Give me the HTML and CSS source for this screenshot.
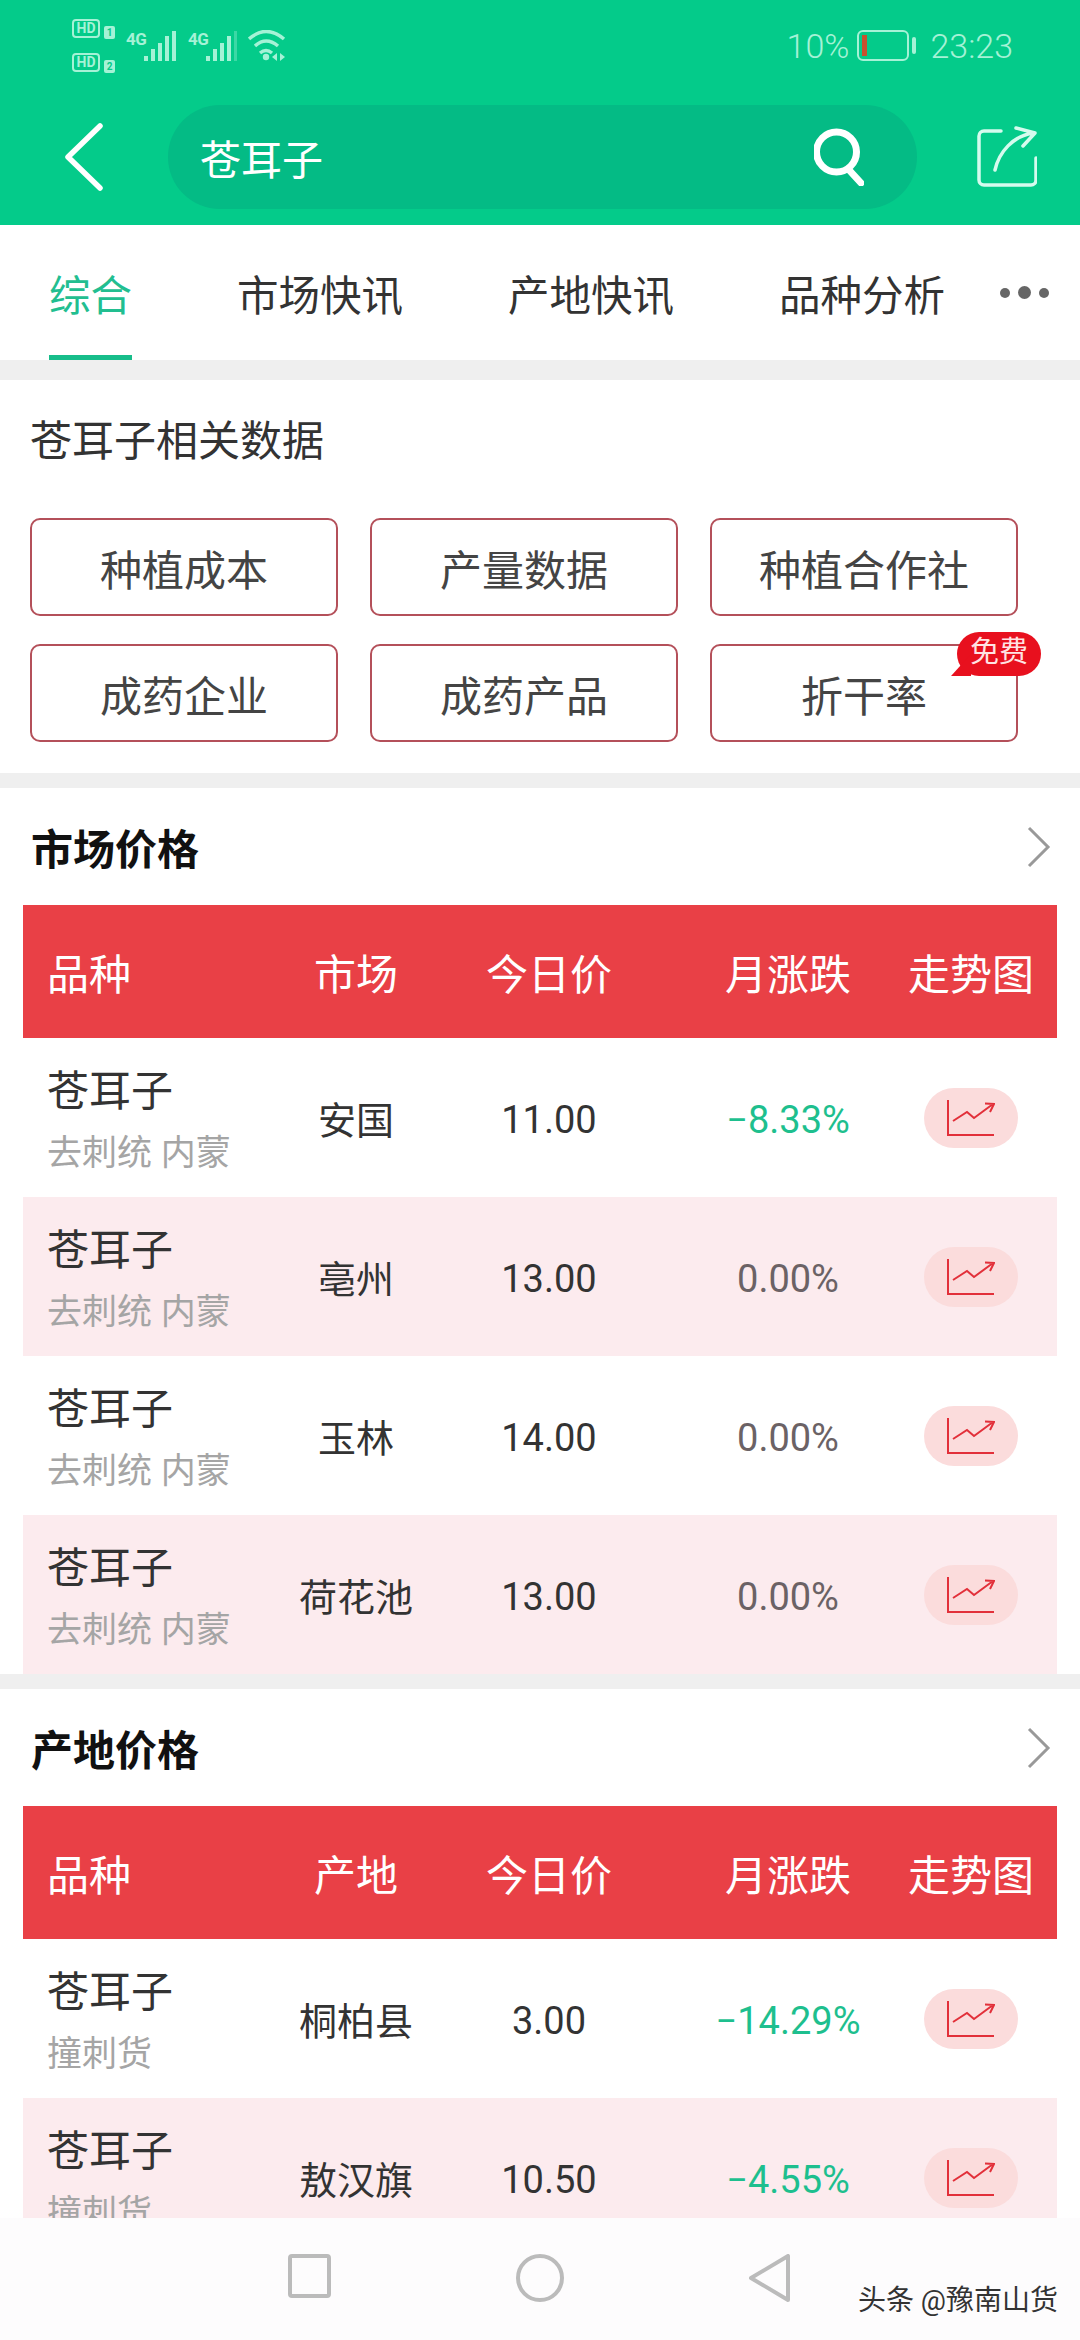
FILE: index.html
```html
<!DOCTYPE html>
<html lang="zh-CN">
<head>
  <meta charset="UTF-8">
  <title>苍耳子</title>
  <meta name="viewport" content="width=device-width, initial-scale=1.0">
  <link rel="stylesheet" href="styles.css">
</head>
<body>

  <svg class="defs" width="0" height="0">
    <symbol id="icono-grafico" viewBox="0 0 48 36">
      <path d="M1 0V35H47" fill="none" stroke="#e2303a" stroke-width="2"/>
      <path d="M6 21L20 12L27 18L46 4M38 3.5L47 4L43 12" fill="none" stroke="#e2303a" stroke-width="2"/>
    </symbol>
    <symbol id="icono-flecha" viewBox="0 0 24 42">
      <path d="M2 2L21 21L2 40" fill="none" stroke="#999" stroke-width="3"/>
    </symbol>
  </svg>

  <header class="cabecera">
    <div class="estado">
      <div class="estado-izq">
        <div class="sims">
          <div class="sim"><span class="hd">HD</span><span class="num">1</span></div>
          <div class="sim"><span class="hd">HD</span><span class="num">2</span></div>
        </div>
        <div class="senal">
          <span class="red">4G</span>
          <svg width="32" height="30" viewBox="0 0 32 30" fill="#a5f2d6">
            <rect x="0" y="25" width="4" height="5"/><rect x="7" y="18" width="4" height="12"/><rect x="14" y="12" width="4" height="18"/><rect x="21" y="5" width="4" height="25"/><rect x="28" y="0" width="4" height="30"/>
          </svg>
        </div>
        <div class="senal">
          <span class="red">4G</span>
          <svg width="32" height="30" viewBox="0 0 32 30" fill="#a5f2d6">
            <rect x="0" y="25" width="4" height="5"/><rect x="7" y="18" width="4" height="12"/><rect x="14" y="12" width="4" height="18"/><rect x="21" y="5" width="4" height="25"/><rect x="28" y="0" width="3" height="30" opacity=".35"/>
          </svg>
        </div>
        <svg class="wifi" width="38" height="32" viewBox="0 0 38 32">
          <path d="M1 9Q18 -6 36 9M7 16Q18 6 30 16M12 23Q18 18 24 23" fill="none" stroke="#a5f2d6" stroke-width="3.5"/>
          <circle cx="18" cy="27" r="3.2" fill="#a5f2d6"/>
          <path d="M24 27L29 23V31ZM37 27L32 23V31Z" fill="#a5f2d6"/>
        </svg>
      </div>
      <div class="estado-der">
        <span class="porcentaje">10%</span>
        <span class="bateria"><span class="carga"></span></span>
        <span class="polo"></span>
        <span class="hora">23:23</span>
      </div>
    </div>
    <div class="barra">
      <svg class="atras" width="42" height="70" viewBox="0 0 42 70">
        <path d="M37 4L5 35L37 66" fill="none" stroke="#fff" stroke-width="5.5" stroke-linecap="round" stroke-linejoin="round"/>
      </svg>
      <div class="buscador">
        <span class="consulta">苍耳子</span>
        <svg width="50" height="58" viewBox="0 0 50 58">
          <circle cx="22.5" cy="24" r="20" fill="none" stroke="#fff" stroke-width="7"/>
          <path d="M36 43L47 55" fill="none" stroke="#fff" stroke-width="7" stroke-linecap="round"/>
        </svg>
      </div>
      <svg class="compartir" width="60" height="62" viewBox="0 0 60 62">
        <path d="M24 5H7a5 5 0 0 0-5 5v44a5 5 0 0 0 5 5h47a5 5 0 0 0 5-5V32" fill="none" stroke="#d5fbee" stroke-width="3.5" stroke-linecap="round"/>
        <path d="M18 44C22 26 36 10 56 7M39 2L58 7L46 20" fill="none" stroke="#d5fbee" stroke-width="3.5" stroke-linecap="round" stroke-linejoin="round"/>
      </svg>
    </div>
  </header>

  <nav class="pestanas">
    <span class="pestana activa">综合</span>
    <span class="pestana">市场快讯</span>
    <span class="pestana">产地快讯</span>
    <span class="pestana">品种分析</span>
    <span class="puntos"><i></i><i class="grande"></i><i></i></span>
  </nav>

  <main class="contenido">
    <section class="bloque datos">
      <h2 class="datos-titulo">苍耳子相关数据</h2>
      <div class="chips">
        <a class="chip">种植成本</a>
        <a class="chip">产量数据</a>
        <a class="chip">种植合作社</a>
        <a class="chip">成药企业</a>
        <a class="chip">成药产品</a>
        <a class="chip">折干率<span class="gratis">免费</span></a>
      </div>
    </section>

    <section class="bloque">
      <div class="titulo-fila">
        <h2>市场价格</h2>
        <svg width="24" height="42"><use href="#icono-flecha"/></svg>
      </div>
      <div class="tabla">
        <div class="fila encabezado"><span>品种</span><span>市场</span><span>今日价</span><span>月涨跌</span><span>走势图</span></div>
        <div class="fila">
          <div class="nombre"><b>苍耳子</b><small>去刺统 内蒙</small></div>
          <span class="lugar">安国</span><span>11.00</span><span class="baja">−8.33%</span>
          <span class="grafico"><svg width="48" height="36"><use href="#icono-grafico"/></svg></span>
        </div>
        <div class="fila par">
          <div class="nombre"><b>苍耳子</b><small>去刺统 内蒙</small></div>
          <span class="lugar">亳州</span><span>13.00</span><span class="igual">0.00%</span>
          <span class="grafico"><svg width="48" height="36"><use href="#icono-grafico"/></svg></span>
        </div>
        <div class="fila">
          <div class="nombre"><b>苍耳子</b><small>去刺统 内蒙</small></div>
          <span class="lugar">玉林</span><span>14.00</span><span class="igual">0.00%</span>
          <span class="grafico"><svg width="48" height="36"><use href="#icono-grafico"/></svg></span>
        </div>
        <div class="fila par">
          <div class="nombre"><b>苍耳子</b><small>去刺统 内蒙</small></div>
          <span class="lugar">荷花池</span><span>13.00</span><span class="igual">0.00%</span>
          <span class="grafico"><svg width="48" height="36"><use href="#icono-grafico"/></svg></span>
        </div>
      </div>
    </section>

    <section class="bloque">
      <div class="titulo-fila">
        <h2>产地价格</h2>
        <svg width="24" height="42"><use href="#icono-flecha"/></svg>
      </div>
      <div class="tabla">
        <div class="fila encabezado"><span>品种</span><span>产地</span><span>今日价</span><span>月涨跌</span><span>走势图</span></div>
        <div class="fila">
          <div class="nombre"><b>苍耳子</b><small>撞刺货</small></div>
          <span class="lugar">桐柏县</span><span>3.00</span><span class="baja">−14.29%</span>
          <span class="grafico"><svg width="48" height="36"><use href="#icono-grafico"/></svg></span>
        </div>
        <div class="fila par">
          <div class="nombre"><b>苍耳子</b><small>撞刺货</small></div>
          <span class="lugar">敖汉旗</span><span>10.50</span><span class="baja">−4.55%</span>
          <span class="grafico"><svg width="48" height="36"><use href="#icono-grafico"/></svg></span>
        </div>
      </div>
    </section>
  </main>

  <footer class="navegacion">
    <svg width="43" height="44" viewBox="0 0 43 44"><rect x="2" y="2" width="39" height="40" rx="2" fill="none" stroke="#bbb" stroke-width="4"/></svg>
    <svg width="48" height="48" viewBox="0 0 48 48"><circle cx="24" cy="24" r="22" fill="none" stroke="#bbb" stroke-width="4"/></svg>
    <svg width="41" height="48" viewBox="0 0 41 48"><path d="M39 2V46L2 24Z" fill="none" stroke="#bbb" stroke-width="4" stroke-linejoin="round"/></svg>
    <span class="marca">头条 @豫南山货</span>
  </footer>

</body>
</html>
```

FILE: styles.css
```css
* {
  margin: 0;
  padding: 0;
  box-sizing: border-box;
}

html, body {
  width: 1080px;
  height: 2340px;
  overflow: hidden;
}

body {
  display: flex;
  flex-direction: column;
  font-family: Roboto, 'Noto Sans CJK SC', sans-serif;
  color: #333;
  background-color: #fff;
}

.defs {
  position: absolute;
}

/* cabecera verde */
.cabecera {
  flex-shrink: 0;
  height: 225px;
  background-color: #04cb8a;
}

.estado {
  height: 91px;
  margin-bottom: 14px;
  padding: 0 67px 0 72px;
  display: flex;
  justify-content: space-between;
  align-items: center;
  color: #a5f2d6;
}

.estado-izq, .estado-der {
  display: flex;
  align-items: center;
}

.sims {
  display: flex;
  flex-direction: column;
  gap: 15px;
  margin-right: 11px;
}

.sim {
  display: flex;
  align-items: flex-end;
  gap: 4px;
  height: 19px;
}

.hd {
  width: 28px;
  height: 19px;
  border: 2px solid #a5f2d6;
  border-radius: 4px;
  font-size: 14px;
  font-weight: 700;
  line-height: 15px;
  text-align: center;
}

.num {
  width: 11px;
  height: 13px;
  margin-bottom: -1px;
  border-radius: 2px;
  background-color: #a5f2d6;
  font-size: 10px;
  font-weight: 700;
  line-height: 13px;
  text-align: center;
  color: #04cb8a;
}

.senal {
  display: flex;
  align-items: flex-end;
  margin-right: 12px;
}

.red {
  align-self: flex-start;
  width: 18px;
  font-size: 17px;
  font-weight: 700;
  line-height: 16px;
  letter-spacing: -0.5px;
  white-space: nowrap;
}

.wifi {
  margin-left: -2px;
}

.porcentaje, .hora {
  font-size: 34px;
  font-weight: 300;
}

.porcentaje {
  margin-right: 8px;
}

.bateria {
  display: block;
  width: 52px;
  height: 31px;
  padding: 3px;
  border: 2.5px solid #a5f2d6;
  border-radius: 6px;
}

.carga {
  display: block;
  width: 5px;
  height: 100%;
  background-color: #c8502f;
}

.polo {
  width: 4px;
  height: 17px;
  margin: 0 14px 0 3px;
  border-radius: 2px;
  background-color: #a5f2d6;
}

.barra {
  height: 104px;
  padding-left: 63px;
  display: flex;
  align-items: center;
}

.buscador {
  width: 749px;
  height: 104px;
  margin: 0 60px 0 63px;
  padding: 0 53px 0 32px;
  display: flex;
  justify-content: space-between;
  align-items: center;
  border-radius: 52px;
  background-color: #04bb85;
}

.consulta {
  font-size: 41px;
  color: #fff;
}

/* pestañas */
.pestanas {
  flex-shrink: 0;
  height: 155px;
  padding-left: 49px;
  display: flex;
  gap: 105px;
  background-color: #fff;
  border-bottom: 20px solid #efefef;
}

.pestana {
  flex-shrink: 0;
  display: flex;
  align-items: center;
  font-size: 41.5px;
  white-space: nowrap;
  color: #333;
}

.pestana.activa {
  color: #22be90;
  box-shadow: inset 0 -5px 0 #17bd8a;
}

.puntos {
  flex-shrink: 0;
  margin-left: -50px;
  display: flex;
  align-items: center;
  gap: 8px;
}

.puntos i {
  width: 10px;
  height: 10px;
  border-radius: 50%;
  background-color: #666;
}

.puntos i.grande {
  width: 13px;
  height: 13px;
}

/* contenido */
.contenido {
  flex: 1;
  min-height: 0;
  overflow: hidden;
}

.bloque {
  border-bottom: 15px solid #efefef;
}

.datos {
  padding: 31px 31px 31px 30px;
}

.datos-titulo {
  height: 62px;
  margin-bottom: 45px;
  font-size: 42px;
  font-weight: 400;
  line-height: 62px;
  color: #333;
}

.chips {
  display: grid;
  grid-template-columns: repeat(3, 308px);
  grid-auto-rows: 98px;
  gap: 28px 32px;
}

.chip {
  position: relative;
  display: flex;
  justify-content: center;
  align-items: center;
  border: 2px solid #b4505a;
  border-radius: 10px;
  font-size: 42px;
  color: #444;
}

.gratis {
  position: absolute;
  top: -14px;
  right: -25px;
  width: 84px;
  height: 44px;
  border-radius: 22px;
  background-color: #e8101e;
  font-size: 29px;
  line-height: 41px;
  text-align: center;
  color: #ffe3e3;
}

.gratis::before {
  content: '';
  position: absolute;
  left: -6px;
  bottom: 0;
  border-bottom: 22px solid #e8101e;
  border-left: 20px solid transparent;
}

.titulo-fila {
  height: 117px;
  padding: 0 29px 0 31px;
  display: flex;
  justify-content: space-between;
  align-items: center;
}

.titulo-fila h2 {
  font-size: 42px;
  font-weight: 700;
  color: #111;
}

.tabla {
  margin: 0 23px;
}

.fila {
  height: 159px;
  padding: 5px 20px 0 24px;
  display: grid;
  grid-template-columns: 238px 142px 244px 234px 132px;
  align-items: center;
  justify-items: center;
  font-size: 38px;
  color: #333;
}

.fila.par {
  background-color: #fcebee;
}

.fila.encabezado {
  height: 133px;
  padding-top: 0;
  background-color: #e94046;
  font-size: 42px;
  color: #fff;
}

.fila.encabezado span {
  white-space: nowrap;
}

.fila.encabezado span:first-child {
  justify-self: start;
}

.nombre {
  justify-self: start;
  margin-top: 6px;
  display: flex;
  flex-direction: column;
  gap: 4px;
}

.nombre b {
  font-size: 42px;
  font-weight: 400;
  line-height: 58px;
  color: #333;
}

.nombre small {
  font-size: 35px;
  line-height: 58px;
  color: #a5a5a5;
}

.lugar {
  margin-top: -6px;
}

.baja {
  color: #1ebf8e;
}

.igual {
  color: #6b6265;
}

.grafico {
  width: 94px;
  height: 60px;
  margin-top: -5px;
  display: flex;
  justify-content: center;
  align-items: center;
  border-radius: 30px;
  background-color: #fbdcdc;
}

/* barra de navegación */
.navegacion {
  position: relative;
  flex-shrink: 0;
  height: 122px;
  padding: 36px 0 0 288px;
  display: flex;
  align-items: flex-start;
  gap: 185px;
  background-color: #fdfcfd;
}

.marca {
  position: absolute;
  right: 22px;
  bottom: 22px;
  font-size: 28px;
  color: #333;
}
```
